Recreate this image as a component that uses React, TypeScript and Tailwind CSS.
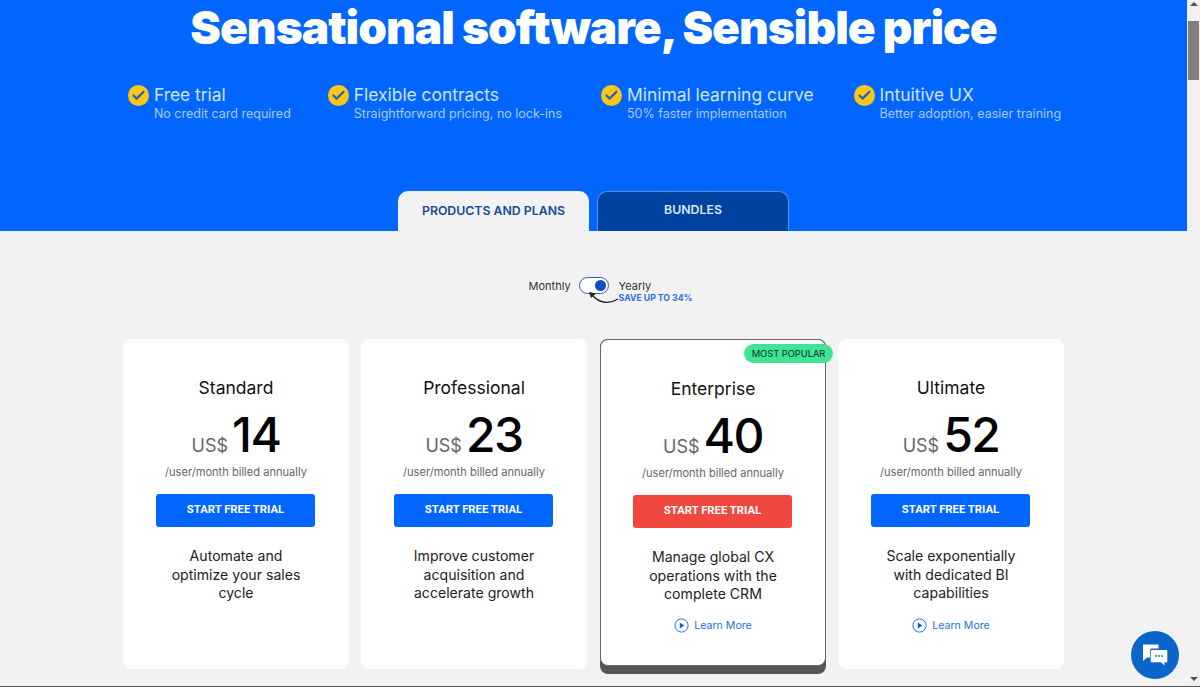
import { Check } from 'lucide-react'

const FEATURES = [
  { title: 'Free trial', sub: 'No credit card required' },
  { title: 'Flexible contracts', sub: 'Straightforward pricing, no lock-ins' },
  { title: 'Minimal learning curve', sub: '50% faster implementation' },
  { title: 'Intuitive UX', sub: 'Better adoption, easier training' },
]

const PLANS = [
  { name: 'Standard', price: '14', text: ['Automate and', 'optimize your sales', 'cycle'], learn: false, popular: false },
  { name: 'Professional', price: '23', text: ['Improve customer', 'acquisition and', 'accelerate growth'], learn: false, popular: false },
  { name: 'Enterprise', price: '40', text: ['Manage global CX', 'operations with the', 'complete CRM'], learn: true, popular: true },
  { name: 'Ultimate', price: '52', text: ['Scale exponentially', 'with dedicated BI', 'capabilities'], learn: true, popular: false },
]

function PlayIcon() {
  return (
    <svg width="15" height="15" viewBox="0 0 15 15" fill="none">
      <circle cx="7.5" cy="7.5" r="6.6" stroke="#0066ff" strokeWidth="0.9" />
      <path d="M5.8 4.6v5.8l4.6-2.9z" fill="#0b5fd8" />
    </svg>
  )
}

function PlanCard({ plan }: { plan: (typeof PLANS)[number] }) {
  const { popular } = plan
  return (
    <div
      className={
        popular
          ? 'relative ml-[1px] w-[226px] h-[335px] rounded-[8px] bg-[#555555] self-start'
          : 'relative w-[226px] h-[330px] rounded-[8px] bg-white'
      }
    >
      <div
        className={
          popular
            ? 'h-[327px] rounded-[8px] bg-white border border-[#666666] flex flex-col items-center'
            : 'h-[330px] rounded-[8px] flex flex-col items-center'
        }
      >
        <h3 className="mt-[38px] text-[17.5px] leading-[22px] text-[#111111]">{plan.name}</h3>
        <div className="mt-[11px] flex items-end h-[49px]">
          <span className="text-[18px] leading-[22px] mb-[2px] mr-[4px] text-[#666666]">US$</span>
          <span className="text-[48px] leading-[49px] text-black font-medium tracking-[-1.5px]">{plan.price}</span>
        </div>
        <p className="mt-[4px] text-[11.1px] leading-[18px] text-[#666666]">/user/month billed annually</p>
        <button
          className={
            popular
              ? "mt-[13px] mr-[1px] w-[159px] h-[33px] rounded-[3px] bg-[#f0483e] text-white text-[11.3px] font-bold font-['Roboto',sans-serif]"
              : "mt-[13px] mr-[1px] w-[159px] h-[33px] rounded-[3px] bg-[#0066ff] text-white text-[11.3px] font-bold font-['Roboto',sans-serif]"
          }
        >
          START FREE TRIAL
        </button>
        <div className="mt-[20px] text-[14.1px] leading-[18.5px] text-[#222222] text-center">
          {plan.text.map((line) => (
            <div key={line}>{line}</div>
          ))}
        </div>
        {plan.learn && (
          <div
            className={
              popular
                ? 'mt-[13px] flex items-center gap-[5px] text-[10.6px] leading-[18px] text-[#2a6fe0]'
                : 'mt-[14px] flex items-center gap-[5px] text-[10.6px] leading-[18px] text-[#2a6fe0]'
            }
          >
            <PlayIcon />
            <span>Learn More</span>
          </div>
        )}
      </div>
      {popular && (
        <span className="absolute right-[-7px] top-[5px] h-[19px] w-[89px] rounded-[10px] bg-[#3fe495] text-[#0f2e24] text-[9.3px] leading-[19px] text-center">
          MOST POPULAR
        </span>
      )}
    </div>
  )
}

export default function App() {
  return (
    <div className="h-[687px] overflow-hidden flex bg-[#f2f2f2] border-b border-[#555555] font-['Inter',sans-serif]">
      <main className="flex-1 min-w-0">
        {/* Hero */}
        <section className="h-[231px] bg-[#0066ff] flex flex-col items-center">
          <h1 className="text-[46px] leading-[54px] font-black text-white tracking-[-1px]">
            Sensational software, Sensible price
          </h1>
          <div className="mt-[29px] pl-[2px] flex justify-center gap-[39px] h-[46px]">
            {FEATURES.map((f) => (
              <div key={f.title} className="flex gap-[5px] first:mr-[-2px] last:ml-[1px]">
                <span className="mt-[2px] w-[21px] h-[21px] rounded-full bg-[#f9c716] flex items-center justify-center">
                  <Check className="w-[15px] h-[15px] text-[#2a5fb0]" strokeWidth={3.5} />
                </span>
                <div>
                  <div className="text-[17.4px] leading-[23px] text-[#cfe3ff]">{f.title}</div>
                  <div className="text-[12.5px] leading-[16px] text-[#a9ccff]">{f.sub}</div>
                </div>
              </div>
            ))}
          </div>
          <div className="mt-[auto] flex gap-[8px]">
            <div className="w-[191px] h-[40px] rounded-t-[10px] bg-[#f2f2f2] text-[#174a94] text-[12.3px] font-semibold flex items-center justify-center">
              PRODUCTS AND PLANS
            </div>
            <div className="w-[192px] h-[40px] pb-[2px] rounded-t-[10px] bg-[#00429f] border border-b-0 border-[#5b8fe0] text-[#d9e6fb] text-[12.3px] font-semibold flex items-center justify-center">
              BUNDLES
            </div>
          </div>
        </section>

        {/* Billing toggle */}
        <div className="mt-[44px] h-[64px] flex justify-center pl-[34px]">
          <span className="text-[11px] leading-[22px] text-[#333333]">Monthly</span>
          <div className="relative ml-[8px] mt-[2px] w-[30px] h-[17px] rounded-full bg-white border border-[#2f5fb8] flex items-center justify-end pr-[2px]">
            <span className="w-[11px] h-[11px] rounded-full bg-[#0f4fc2]" />
            <svg className="absolute left-[8px] top-[13px]" width="32" height="16" viewBox="0 0 32 16" fill="none">
              <path d="M30 8C22 13 12 13 4 4" stroke="#222222" strokeWidth="1.3" />
              <path d="M1 1l7 1.5-5 4.5z" fill="#222222" />
            </svg>
          </div>
          <div className="ml-[10px]">
            <div className="text-[11px] leading-[22px] text-[#333333]">Yearly</div>
            <div className="mt-[-5px] text-[8.7px] leading-[12px] font-bold text-[#2a6fe0]">SAVE UP TO 34%</div>
          </div>
        </div>

        {/* Plans */}
        <div className="flex justify-center gap-[12px]">
          {PLANS.map((plan) => (
            <PlanCard key={plan.name} plan={plan} />
          ))}
        </div>
      </main>

      {/* Scrollbar */}
      <div className="relative w-[13px] bg-[#f1f1f1]">
        <div className="absolute left-[1px] right-[1px] top-[21px] h-[59px] bg-[#808080]" />
        <div className="absolute left-[3px] top-[2px] w-0 h-0 border-x-[4px] border-x-transparent border-b-[4px] border-b-[#505050]" />
        <div className="absolute left-[3px] bottom-[5px] w-0 h-0 border-x-[4px] border-x-transparent border-t-[4px] border-t-[#505050]" />
      </div>

      {/* Chat bubble */}
      <button className="absolute left-[1131px] top-[631px] w-[48px] h-[48px] rounded-full bg-[#0a66c8] flex items-center justify-center">
        <svg width="26" height="24" viewBox="0 0 26 24">
          <path d="M1 1.5h15.5v4H9.5a1.5 1.5 0 0 0-1.5 1.5v7.5H5L1 18z" fill="#ffffff" />
          <path d="M9.5 7h15a.8.8 0 0 1 .8.8v11.5h-2.8v3.2l-3.6-3.2H9.5a.8.8 0 0 1-.8-.8V7.8A.8.8 0 0 1 9.5 7z" fill="#ffffff" />
          <circle cx="14" cy="13" r="0.9" fill="#0a66c8" />
          <circle cx="17" cy="13" r="0.9" fill="#0a66c8" />
          <circle cx="20" cy="13" r="0.9" fill="#0a66c8" />
        </svg>
      </button>
    </div>
  )
}
